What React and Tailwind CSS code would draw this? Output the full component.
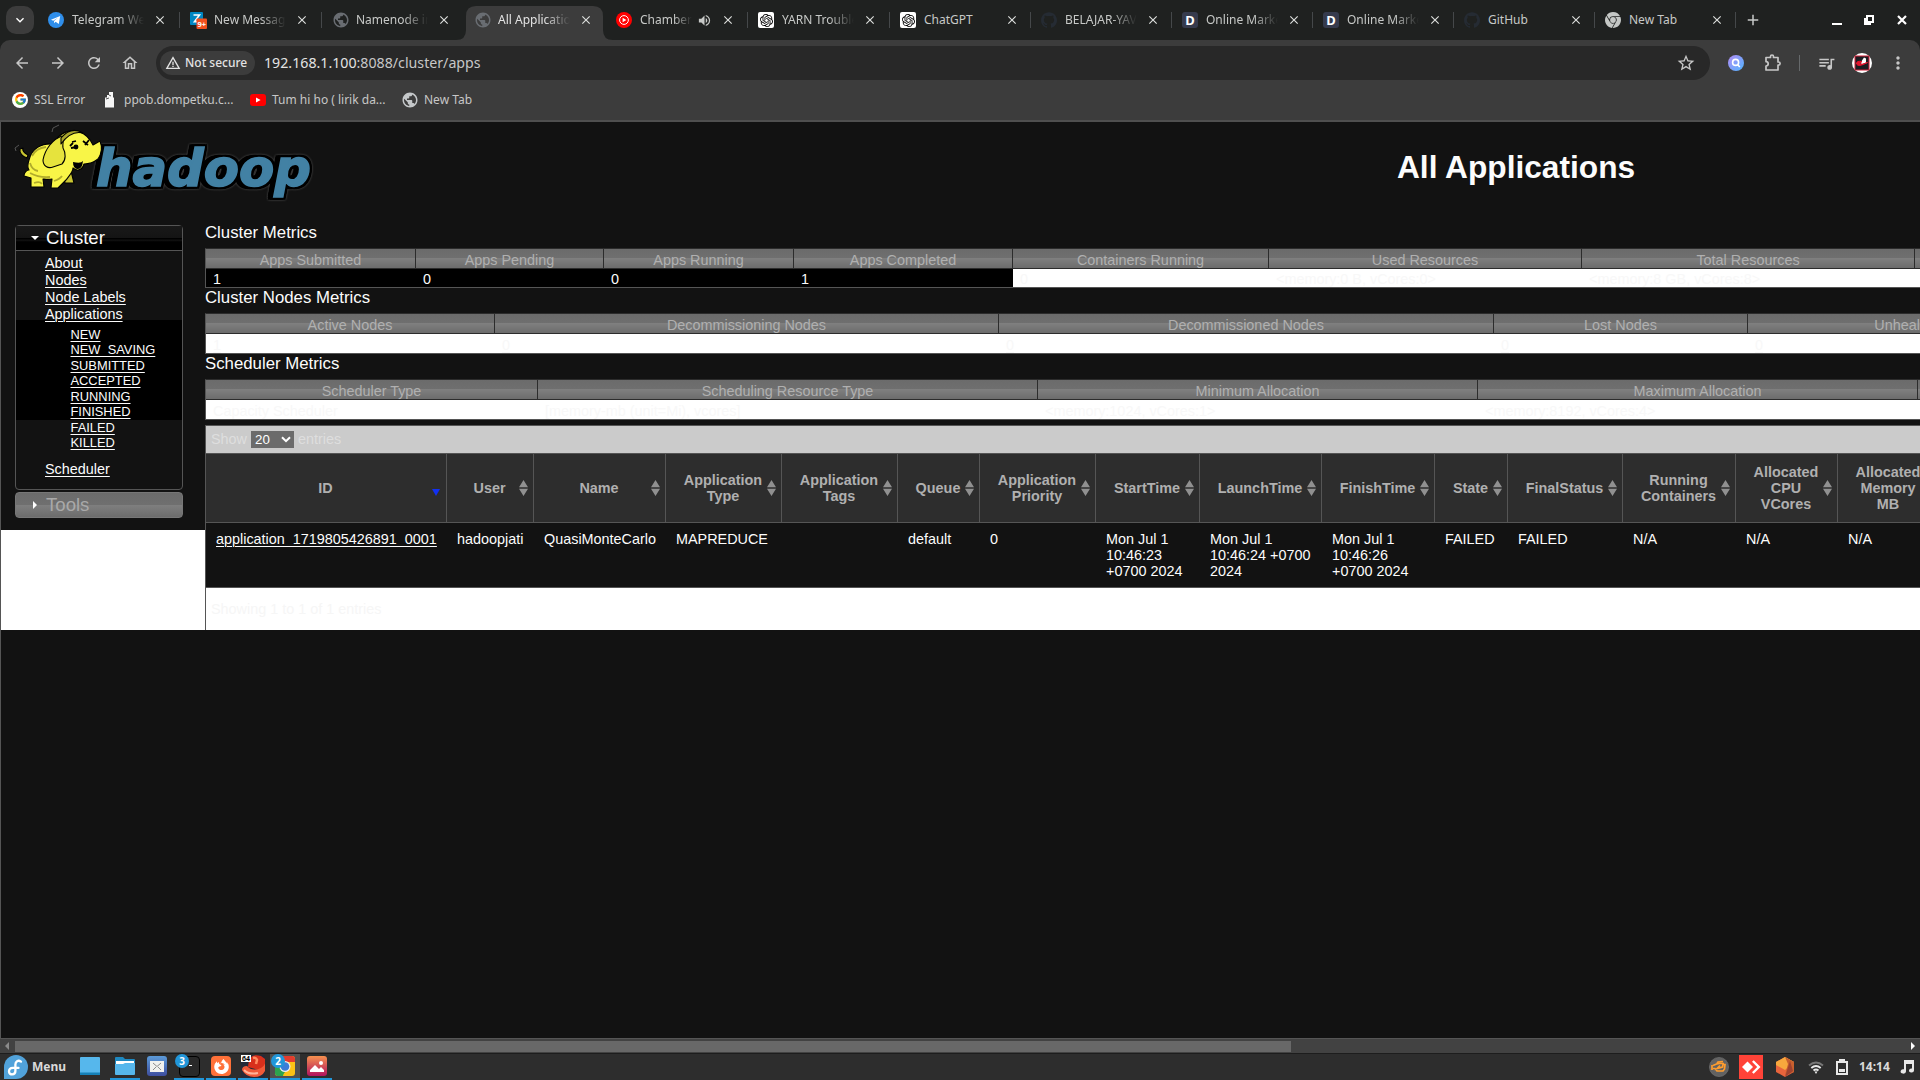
import React from 'react';
import { SiOpenai, SiGithub, SiGooglechrome, SiFirefoxbrowser } from 'react-icons/si';
import {
  MdArrowBack, MdArrowForward, MdRefresh, MdOutlineHome, MdWarningAmber, MdStarBorder,
  MdQueueMusic, MdMoreVert, MdVolumeUp, MdClose, MdAdd, MdPublic, MdExpandMore,
} from 'react-icons/md';
import { FcGoogle } from 'react-icons/fc';

const Telegram = () => (
  <svg viewBox="0 0 16 16" className="h-4 w-4"><circle cx="8" cy="8" r="8" fill="#2f8eea" /><path d="M3 7.8 12.2 4 10.8 12 7.6 9.8 6.2 11.2 6 8.9 9.8 5.8 5.2 8.7Z" fill="#fff" /></svg>
);
const Zimbra = () => (
  <svg viewBox="0 0 17 17" className="h-[17px] w-[17px]">
    <rect width="13" height="13" rx="1" fill="#0087c3" />
    <path d="M3.5 3h6L4.5 9.6h5" fill="none" stroke="#fff" strokeWidth="1.6" />
    <rect x="6.5" y="6.5" width="10.5" height="10.5" rx="1" fill="#f4511e" />
    <text x="11.7" y="14.6" textAnchor="middle" fontSize="7.5" fontWeight="700" fontFamily="Noto Sans, sans-serif" fill="#fff">9+</text>
  </svg>
);
const Globe = ({ light }) => <MdPublic className={light ? 'h-[18px] w-[18px] text-[#c4c7c9]' : 'h-[18px] w-[18px] text-[#696d72]'} />;
const YtMusic = () => (
  <svg viewBox="0 0 16 16" className="h-4 w-4"><circle cx="8" cy="8" r="8" fill="#f00" /><circle cx="8" cy="8" r="4.4" fill="none" stroke="#fff" strokeWidth="1" /><path d="M6.6 5.8 10.4 8 6.6 10.2Z" fill="#fff" /></svg>
);
const Gpt = () => <span className="flex h-4 w-4 items-center justify-center rounded-[2px] bg-white"><SiOpenai className="h-[13px] w-[13px] text-black" /></span>;
const DIcon = () => <span className="flex h-4 w-4 items-center justify-center rounded-[3px] bg-[#363b4d] text-[13px] leading-none font-bold text-white">D</span>;
const Hub = () => <SiGithub className="h-4 w-4 text-[#252b33]" />;

const tabs = [
  [Telegram, 'Telegram Web'], [Zimbra, 'New Message'], [Globe, 'Namenode information'], [Globe, 'All Applications'],
  [YtMusic, 'Chamber of'], [Gpt, 'YARN Troubleshoot'], [Gpt, 'ChatGPT'], [Hub, 'BELAJAR-YAVA'],
  [DIcon, 'Online Market'], [DIcon, 'Online Market'], [Hub, 'GitHub'],
  [() => <SiGooglechrome className="h-4 w-4 text-[#c4c7c5]" />, 'New Tab'],
];

function Tab({ Icon, label, index }) {
  const active = index === 3;
  const audio = index === 4;
  return (
    <div className={`relative flex h-10 shrink-0 items-center pl-[10px] ${index < 6 ? 'w-[142px]' : 'w-[141px]'}`}>
      {active && (
        <svg viewBox="0 0 158 34" className="absolute bottom-0 -left-[8px] h-[34px] w-[158px]">
          <path d="M0 34Q10 34 10 24V10Q10 0 20 0H137Q147 0 147 10V24Q147 34 157 34Z" fill="#3c3c3c" />
        </svg>
      )}
      <span className="relative flex w-[18px] items-center"><Icon /></span>
      <span className={`relative ml-[6px] overflow-hidden whitespace-nowrap text-[12px] ${label.length < 8 ? '' : '[mask-image:linear-gradient(to_right,#000_65%,transparent)]'} ${audio ? 'w-[52px]' : 'w-[72px]'} ${active ? 'text-[#e3e3e3]' : 'text-[#c7c9c7]'}`}>{label}</span>
      {audio && <MdVolumeUp className="ml-[5px] h-[15px] w-[15px] text-[#c7c9c7]" />}
      <MdClose className="absolute left-[115px] h-[14px] w-[14px] text-[#dcdedc]" />
      {index !== 2 && index !== 3 && <span className="absolute right-0 h-4 w-px bg-[#45484a]" />}
    </div>
  );
}

function Browser() {
  return (
    <div className="bg-[#1f2120] font-['Noto_Sans',sans-serif]">
      <div className="flex h-10 items-center">
        <div className="ml-[6px] mr-1 flex h-7 w-7 items-center justify-center rounded-[10px] bg-[#3c3c3c]"><MdExpandMore className="h-4 w-4 text-white" /></div>
        {tabs.map(([Icon, label], i) => <Tab key={i} Icon={Icon} label={label} index={i} />)}
        <MdAdd className="ml-[8px] h-[18px] w-[18px] text-[#c7c9c7]" />
        <span className="mt-[8px] ml-[70px] h-[2px] w-[10px] bg-white" />
        <svg viewBox="0 0 10 10" className="ml-[22px] h-[10px] w-[10px]" fill="none" stroke="#fff" strokeWidth="2"><path d="M3 1h6v6H3ZM1 3v6h6" /></svg>
        <svg viewBox="0 0 10 10" className="ml-[23px] h-[10px] w-[10px]" stroke="#fff" strokeWidth="2.2"><path d="M1 1 9 9M9 1 1 9" /></svg>
      </div>
      <div className="rounded-t-[10px] bg-[#3c3c3c]">
        <div className="flex h-[46px] items-center pl-[13px] text-[#c7c7c7]">
          <MdArrowBack className="h-[18px] w-[18px]" />
          <MdArrowForward className="ml-[18px] h-[18px] w-[18px]" />
          <MdRefresh className="ml-[18px] h-[18px] w-[18px]" />
          <MdOutlineHome className="ml-[18px] h-[18px] w-[18px]" />
          <div className="ml-[17px] flex h-[34px] w-[1554px] items-center rounded-full bg-[#282828] pr-[14px] pl-[4px]">
            <div className="flex h-6 w-[95px] items-center rounded-full bg-[#3c3c3c] pl-[5px] text-[12px] font-medium whitespace-nowrap text-[#e3e3e3]"><MdWarningAmber className="mr-[4px] h-4 w-4" />Not secure</div>
            <span className="mb-px ml-[9px] text-[14.2px] leading-[20px] text-[#e3e3e3]">192.168.1.100<span className="text-[#c7c7c7]">:8088/cluster/apps</span></span>
            <MdStarBorder className="ml-auto h-[20px] w-[20px]" />
          </div>
          <svg viewBox="0 0 16 16" className="ml-[18px] h-4 w-4">
            <defs><linearGradient id="lens" x1="0" y1="0" x2="1" y2="1"><stop stopColor="#b48cf5" /><stop offset="1" stopColor="#4fb4ff" /></linearGradient></defs>
            <circle cx="8" cy="8" r="8" fill="url(#lens)" /><circle cx="7.6" cy="7.4" r="3" fill="none" stroke="#fff" strokeWidth="1.6" /><path d="m9.8 9.8 2 2.2" stroke="#fff" strokeWidth="1.6" />
          </svg>
          <svg viewBox="0 0 18 18" className="mb-px ml-[20px] h-[18px] w-[18px]" fill="none" stroke="#c7c7c7" strokeWidth="1.7" strokeLinejoin="round">
            <path d="M2 3.500h4.500v-1a1.500 1.500 0 0 1 3 0v1H14V8h.500a1.600 1.600 0 0 1 0 3.200H14V16H2v-4a2.200 2.200 0 0 0 0-4.400Z" />
          </svg>
          <span className="ml-[17px] h-4 w-px bg-[#66696b]" />
          <MdQueueMusic className="ml-[17px] h-[19px] w-[19px]" />
          <svg viewBox="0 0 20 20" className="ml-[16px] h-5 w-5"><circle cx="10" cy="10" r="10" fill="#fff" /><path d="M3 3h14v14H3Z" fill="#1c1d22" stroke="#d21f36" strokeWidth="1" /><path d="M9 9 12 4.500 14 5.500V9.500L9.500 12Z" fill="#fff" /><path d="M10 8.500Q4 7.500 4.500 11 6 14.500 15.500 9.500 9 12 8 11 8 9.500 10 8.500Z" fill="#e3132c" stroke="#e3132c" strokeWidth="1" /></svg>
          <MdMoreVert className="ml-[16px] h-5 w-5" />
        </div>
        <div className="flex h-[34px] items-center pb-[7px] pl-3 text-[12px] text-[#c7c7c7]">
          <span className="flex h-4 w-4 items-center justify-center rounded-full bg-white"><FcGoogle className="h-[13px] w-[13px]" /></span>
          <span className="ml-[6px] w-[70px] whitespace-nowrap">SSL Error</span>
          <svg viewBox="0 0 12 16" className="h-4 w-3"><path d="M1 5.500h9v10H1ZM3 3h6v3H3ZM5 0h4v3H5Z" fill="#f5f5f5" /><path d="m2 7 3-1M5 3l2 1" stroke="#555" /></svg>
          <span className="ml-[8px] w-[126px] whitespace-nowrap">ppob.dompetku.c...</span>
          <svg viewBox="0 0 16 12" className="h-3 w-4"><rect width="16" height="12" rx="3" fill="#f00" /><path d="m6 3.600 4.600 2.400L6 8.400Z" fill="#fff" /></svg>
          <span className="ml-[6px] w-[129px] whitespace-nowrap">Tum hi ho ( lirik da...</span>
          <Globe light />
          <span className="ml-[5px]">New Tab</span>
        </div>
        <div className="h-[2px] bg-[#4f4f4f]" />
      </div>
    </div>
  );
}

function Logo() {
  return (
    <svg viewBox="0 0 300 76" className="mt-[3px] ml-[14px] h-[76px] w-[300px] shrink-0 overflow-visible">
      <text
        x="81" y="59.5" textLength="215" lengthAdjust="spacingAndGlyphs"
        fontFamily="DejaVu Sans, sans-serif" fontWeight="700" fontStyle="oblique" fontSize="52"
        fill="#4281a4" stroke="#4281a4" strokeWidth="1.6" strokeLinejoin="miter"
        className="[filter:drop-shadow(2px_0_0_#000)_drop-shadow(0_2px_0_#000)_drop-shadow(0_-2px_0_#000)_drop-shadow(-5px_0_0_#000)_drop-shadow(0_0_1px_#555)]"
      >hadoop</text>
      <g stroke="#000" strokeWidth="1.1" strokeLinejoin="round">
        <path d="M12 32C8 31 4 27 5 23l3-1c-1 3 1 5 5 7Z" fill="#c9c532" />
        <path d="M48 50 56 45 59 57 50 57Z" fill="#c9c532" />
        <path d="M14 34C17 22 27 17 38 18 44 7 55 2 65 6 73 9 77 17 78 19L85 15C87 20 87 27 83 33 78 37 73 38 69 38 67 45 61 45 58 42 58 46 54 50 51 54L43 62 36 62 37 53C33 54 29 53 28 53L29 61 16 61 16 52 9 50C9 46 12 44 14 44 12 41 13 37 14 34Z" fill="#f8f547" />
        <path d="M47 10C38 13 30 23 28 34 28 40 33 43 38 41L47 38C51 34 51 27 48 22 47 17 50 12 47 10Z" fill="#e6e33d" />
        <path d="M46 12Q56 0 68 7 56 4 46 18Z" fill="#a9a52e" />
      </g>
      <path d="m55 20 3-3m-2 5 6-1m6-6 5 4m1-5-4 5m-13-3 4-1" stroke="#000" strokeWidth="1.8" fill="none" />
      <circle cx="61" cy="21" r="2.4" /><path d="M58 36q8 2 10-1-1 9-6 8-4-1-4-7Z" /><path d="M1 25 0 22l4-3M37 6l1-4 6-3" stroke="#555" fill="none" />
      <path d="M19 57q6-2 8 1M39 55q6-2 8-5M15 37q2 7 8 8M15 47q9 5 20 4M17 30q4-8 14-9" stroke="#b0ab2b" strokeWidth="1.8" fill="none" />
    </svg>
  );
}

const link = 'underline underline-offset-[2px] decoration-1';
const glossy = 'bg-[linear-gradient(#6b6b6b_0%,#6f6f6f_48%,#7f7f7f_50%,#6c6c6c_100%)]';

function Sidebar() {
  return (
    <div className="mt-[22px] ml-[14px] w-[168px]">
      <div className="h-[265px] rounded-[4px] border border-[#555] text-[#fcfcfc]">
        <div className="flex h-[25px] items-center border-b border-[#555] bg-[linear-gradient(#191919_0%,#141414_48%,#000_50%,#000_55%,#151515_58%,#000_66%)] text-[18.6px]">
          <span className="ml-[15px] border-x-[4px] border-t-[4px] border-x-transparent border-t-white" />
          <span className="ml-[7px]">Cluster</span>
        </div>
        <ul className="pt-[4px] pl-[29px] text-[14.4px] leading-[17px]">
          {['About', 'Nodes', 'Node Labels', 'Applications'].map((t) => <li key={t} className="relative z-10"><span className={link}>{t}</span></li>)}
        </ul>
        <ul className="-mt-[3px] h-[139px] bg-[linear-gradient(#000_0px,#000_100px,transparent_100px)] pt-[7px] pl-[54.5px] text-[12.86px] leading-[15.45px]">
          {['NEW', 'NEW_SAVING', 'SUBMITTED', 'ACCEPTED', 'RUNNING', 'FINISHED', 'FAILED', 'KILLED'].map((t) => <li key={t}><span className={link}>{t}</span></li>)}
        </ul>
        <div className={`pl-[29px] text-[14.4px] leading-[20px] ${link}`}>Scheduler</div>
      </div>
      <div className={`mt-[2px] flex h-[26px] items-center rounded-[4px] border border-[#777] text-[18.6px] text-[#a9a9a9] ${glossy}`}>
        <span className="ml-[17px] border-y-[4px] border-l-[4px] border-y-transparent border-l-white" />
        <span className="ml-[9px]">Tools</span>
      </div>
    </div>
  );
}

function Metrics({ title, titleCls, rowCls, cols, underlined }) {
  return (
    <section>
      <h3 className={`text-[16.8px] leading-[20px] text-[#fcfcfc] ${titleCls}`}>{title}</h3>
      <div className="border-y border-l border-t-[#2c2c2c] border-b-[#555] border-l-[#555]">
        <div className="flex">
          {cols.map(([h, v, w, dark]) => (
            <div key={h} className="shrink-0" style={{ width: w }}>
              <div className={`flex h-[20px] items-end justify-center border-r border-b border-[#2c2c2c] text-[14.4px] leading-[16px] whitespace-nowrap text-[#b0b0b0] ${glossy}`}>{h}</div>
              <div className={`pl-[7px] text-[14.4px] whitespace-nowrap ${rowCls} ${dark ? 'bg-black text-[#fcfcfc]' : 'bg-white text-[#f8f8f8]'} ${underlined ? link : ''}`}>{v}</div>
            </div>
          ))}
        </div>
      </div>
    </section>
  );
}

const appCols = [
  ['ID', 'application_1719805426891_0001', 241], ['User', 'hadoopjati', 87], ['Name', 'QuasiMonteCarlo', 132],
  ['Application Type', 'MAPREDUCE', 116], ['Application Tags', '', 116], ['Queue', 'default', 82],
  ['Application Priority', '0', 116], ['StartTime', 'Mon Jul 1 10:46:23 +0700 2024', 104],
  ['LaunchTime', 'Mon Jul 1 10:46:24 +0700 2024', 122], ['FinishTime', 'Mon Jul 1 10:46:26 +0700 2024', 113],
  ['State', 'FAILED', 73], ['FinalStatus', 'FAILED', 115], ['Running Containers', 'N/A', 113],
  ['Allocated CPU VCores', 'N/A', 102], ['Allocated Memory MB', 'N/A', 102],
];

function Apps() {
  return (
    <section className="mt-[5px] border-y border-l border-[#555]">
      <div className="flex h-[27px] items-center bg-[#cbcbcb] pl-[5px] text-[14.4px] text-[#dedede]">
        Show
        <span className="mx-[4px] flex h-[17px] w-[43px] items-center justify-between bg-[#6b6b6b] pr-[3px] pl-[4px] text-[13.33px] text-white">
          20<svg viewBox="0 0 10 7" className="h-[7px] w-[10px]"><path d="m1 1.200 4 4 4-4" fill="none" stroke="#fff" strokeWidth="2" /></svg>
        </span>
        entries
      </div>
      <div className="flex border-y border-[#555]">
        {appCols.map(([h, v, w], i) => (
          <div key={h} className="shrink-0" style={{ width: w }}>
            <div className="relative flex h-[69px] items-center justify-center border-r border-b border-[#555] bg-[#2d2d2d] pr-[18px] pl-[17px] text-center text-[14.4px] leading-[16px] font-bold text-[#b0b0b0]">
              <span className="shrink-0" style={{ maxWidth: w - 30 }}>{h}</span>
              {i === 0 ? (
                <span className="absolute top-[35px] right-[6px] border-x-[4px] border-t-[7px] border-x-transparent border-t-[#1230f0]" />
              ) : (
                <svg viewBox="0 0 9 16" className="absolute top-[26px] right-[5px] h-4 w-[9px]"><path d="M0 7.300 4.500 0 9 7.300ZM0 8.700h9L4.500 16Z" fill="#909090" /></svg>
              )}
            </div>
            <div className="h-[64px] bg-[#121212] pt-[8px] pr-[8px] pl-[10px] text-[14.4px] leading-[16px] text-[#fcfcfc]">
              <span className={i === 0 ? link : ''}>{v}</span>
            </div>
          </div>
        ))}
      </div>
      <div className="h-[42px] bg-white pt-[11px] pl-[5px] text-[14.4px] leading-[20px] text-[#f6f6f6]">Showing 1 to 1 of 1 entries</div>
    </section>
  );
}

const Item = ({ children, on, hot }) => (
  <div className={`relative flex h-[26px] w-[30px] items-center justify-center ${on ? 'border-b-2 border-[#2196d9]' : 'border-b-2 border-transparent'} ${hot ? 'bg-[#505050]' : ''}`}>{children}</div>
);
const Badge = ({ n }) => <span className="absolute top-0 left-px flex h-[14px] w-[14px] items-center justify-center rounded-full bg-[#2196d9] text-[10px] leading-none font-bold text-white">{n}</span>;

function Taskbar() {
  return (
    <div className="flex h-[27px] items-center border-t border-[#1d1d1d] bg-[#2d2d2d] font-['Noto_Sans',sans-serif]">
      <svg viewBox="0 0 24 24" className="ml-[4px] h-6 w-6"><path d="M12 0a12 12 0 0 1 0 24H0V12A12 12 0 0 1 12 0Z" fill="#51a2da" /><path d="M17 6.600c-3-2-5.600 0-5.600 3v6.500c0 4.400-6.400 4.400-6.400.4 0-2.800 2.400-3.600 4-3.600h5.500" fill="none" stroke="#fff" strokeWidth="2.3" strokeLinecap="round" /></svg>
      <span className="ml-[4px] w-[43px] text-[12px] font-bold text-[#dadada]">Menu</span>
      <div className="flex gap-[2px]">
        <Item><svg viewBox="0 0 20 18" className="h-[18px] w-5"><rect width="20" height="18" rx="1" fill="#56b7ec" /><rect y="15.5" width="20" height="2.5" fill="#1581b8" /></svg></Item>
        <span className="w-px" />
        <Item on><svg viewBox="0 0 20 18" className="h-[18px] w-5"><path d="M0 1q0-1 1-1h7l2 2h9q1 0 1 1v4H0Z" fill="#1e88c0" /><rect x="1" y="4" width="18" height="4" fill="#fff" /><path d="M0 7h8l2-1h10v11q0 1-1 1H1q-1 0-1-1Z" fill="#56b7ec" /></svg></Item>
        <Item><svg viewBox="0 0 20 20" className="h-5 w-5"><defs><linearGradient id="mail" x2="0" y2="1"><stop stopColor="#5b9ad8" /><stop offset="1" stopColor="#3e4e9e" /></linearGradient></defs><rect width="20" height="20" rx="3" fill="url(#mail)" /><rect x="3" y="5" width="14" height="11" fill="#f1f1ee" /><path d="m6 7 4 3.500L14 7M6 14l3-3m5 3-3-3" stroke="#8c8c8c" fill="none" /></svg></Item>
        <Item on><span className="flex h-[21px] w-[21px] rounded-[4px] border border-black bg-[#292929] pt-[8px] pl-[9px]"><span className="h-px w-[3px] bg-white" /></span><Badge n="3" /></Item>
        <Item on><span className="flex h-5 w-5 items-center justify-center rounded-[4px] bg-[#ff7139]"><SiFirefoxbrowser className="h-[15px] w-[15px] text-white" /></span></Item>
        <Item on>
          <svg viewBox="0 0 24 23" className="h-[23px] w-6"><rect width="24" height="23" fill="#252a38" /><path d="M7 12C8 0 13-1 20 1l4 3v8l-6 3Z" fill="#d8301c" /><path d="M1 15Q1 11 6 11q5 6 14 2 5-3 4-7v10q-3 6-11 6T1 15Z" fill="#f15a38" /><path d="M3 15q5 5 14 3" stroke="#ffb498" strokeWidth="2" fill="none" /><path d="M12 3q3-1 4 2l-1 4" stroke="#ff8a60" strokeWidth="2.5" fill="none" /><rect width="10" height="7" fill="#fff" /><text x="5" y="6" textAnchor="middle" fontSize="7" fontWeight="700" fontFamily="Noto Sans, sans-serif">64</text></svg>
        </Item>
        <Item on hot>
          <svg viewBox="0 0 20 20" className="h-5 w-5"><rect width="20" height="20" rx="3" fill="#fbc116" /><path d="M3 0h14q3 0 3 3v3H10L2 14 0 8V3q0-3 3-3Z" fill="#e33b2e" /><path d="M0 6 9 14l-1 6H3q-3 0-3-3Z" fill="#2da44e" /><path d="M7 20 13 12l-8-1-3 9Z" fill="#2da44e" /><circle cx="10" cy="10.5" r="5.5" fill="#eee" /><circle cx="10" cy="10.5" r="4.3" fill="#3b7dd8" /></svg>
          <Badge n="2" />
        </Item>
        <Item on>
          <svg viewBox="0 0 20 20" className="h-5 w-5"><defs><linearGradient id="pic" x2="0" y2="1"><stop stopColor="#f6914f" /><stop offset="1" stopColor="#b0125f" /></linearGradient></defs><rect width="20" height="20" rx="3" fill="url(#pic)" /><path d="M3 16v-2l5-5 4 4 2-2 3 3v2Z" fill="#fff" /><circle cx="14" cy="7" r="2" fill="#fff" /></svg>
        </Item>
      </div>
      <svg viewBox="0 0 20 20" className="ml-auto h-5 w-5"><circle cx="10" cy="10" r="9.6" fill="#626262" stroke="#777" strokeWidth=".6" /><path d="M4 8.500 7.500 7l3-.500h4.500M8 6.500 9 5l5-.500M3 8v5M4 11.500h2l2 2.500h6l1.500-2 .500-4.500h-2L13.500 10 8 11.500 11 8.500" fill="none" stroke="#ff9d2e" strokeWidth="1.7" /></svg>
      <svg viewBox="0 0 24 24" className="ml-[10px] h-6 w-6"><rect width="24" height="24" fill="#ff4338" /><path d="m8.500 6.500 5.500 5.500-5.500 5.500L3 12Z" fill="#fff" /><path d="m13 6.800 1.700-1.600L21.500 12l-6.800 6.800L13 17.200 18.200 12Z" fill="#fff" /></svg>
      <svg viewBox="0 0 18 20" className="ml-[13px] h-5 w-[18px]"><path d="m9 0 9 5v10l-9 5-9-5V5Z" fill="#e8643c" /><path d="m9 0 9 5-9 8L0 8V5Z" fill="#f7a83d" /><path d="m9 0 9 5v10l-9 3 3-11Z" fill="#c8602e" /><path d="m14 4 3 10-8 6Z" fill="#9f4230" /></svg>
      <svg viewBox="0 0 16 13" className="ml-[14px] h-[13px] w-4" fill="none" stroke="#e8e8e8" strokeWidth="1.9"><path d="M1 4.500q7-6 14 0" stroke="#777" /><path d="M3.300 7q4.700-4 9.400 0M5.500 9.400q2.500-2 5 0" /><path d="M6.500 10.500h3L8 13Z" fill="#e8e8e8" stroke="none" /></svg>
      <svg viewBox="0 0 12 16" className="ml-[12px] h-4 w-3"><path d="M3 2V0h6v2h3v14H0V2Zm-1 2v10h8V4Z" fill="#e8e8e8" fillRule="evenodd" /><path d="M3 10h6v3H3Z" fill="#e8e8e8" /></svg>
      <span className="ml-[11px] w-[41px] text-[12px] font-bold text-[#dadada]">14:14</span>
      <svg viewBox="0 0 14 14" className="mr-[6px] h-[14px] w-[14px]"><path d="M4 0h10v10.500a2.500 2 0 1 1-2-2V4H6v7.500a2.700 2.200 0 1 1-2-2.200Z" fill="#e8e8e8" /></svg>
    </div>
  );
}

export default function App() {
  return (
    <div className="flex h-[1080px] w-[1920px] flex-col overflow-hidden bg-[#121212]">
      <Browser />
      <div className="flex min-h-0 flex-1 flex-col border-l border-[#555] font-['Liberation_Sans',Arial,sans-serif]">
        <div className="flex h-[81px] items-center">
          <Logo />
          <h1 className="mt-[10px] ml-[1082px] text-[31.68px] leading-none font-bold whitespace-nowrap text-[#fcfcfc]">All Applications</h1>
        </div>
        <div className="flex h-[427px]">
          <div className="flex w-[204px] shrink-0 flex-col bg-[linear-gradient(#121212_0px,#121212_327px,#fff_327px)]">
            <Sidebar />
          </div>
          <main className="min-w-0 flex-1 overflow-hidden">
            <Metrics title="Cluster Metrics" titleCls="pt-[20px] pb-[5px]" rowCls="h-[18px] leading-[21px]" cols={[
              ['Apps Submitted', '1', 210, 1], ['Apps Pending', '0', 188, 1], ['Apps Running', '0', 190, 1], ['Apps Completed', '1', 219, 1],
              ['Containers Running', '0', 256], ['Used Resources', '<memory:0 B, vCores:0>', 313], ['Total Resources', '<memory:8 GB, vCores:8>', 333], ['Reserved Resources', '', 200],
            ]} />
            <Metrics underlined title="Cluster Nodes Metrics" titleCls="pb-[5px]" rowCls="h-[19px] leading-[22px]" cols={[
              ['Active Nodes', '1', 289], ['Decommissioning Nodes', '0', 504], ['Decommissioned Nodes', '0', 495], ['Lost Nodes', '0', 254], ['Unhealthy Nodes', '0', 364],
            ]} />
            <Metrics title="Scheduler Metrics" titleCls="pb-[5px]" rowCls="h-[19px] leading-[22px]" cols={[
              ['Scheduler Type', 'Capacity Scheduler', 332], ['Scheduling Resource Type', '[memory-mb (unit=Mi), vcores]', 500], ['Minimum Allocation', '<memory:1024, vCores:1>', 440], ['Maximum Allocation', '<memory:8192, vCores:4>', 440], ['Maximum Cluster', '', 200],
            ]} />
            <Apps />
          </main>
        </div>
        <div className="flex-1" />
      </div>
      <div className="flex h-[15px] items-center border-t border-[#555] bg-[#424242]">
        <span className="mr-[6px] ml-[5px] border-y-[4px] border-r-[4px] border-y-transparent border-r-[#8a8a8a]" />
        <span className="h-[11px] w-[1276px] bg-[#686868]" />
        <span className="mr-[5px] ml-auto border-y-[4px] border-l-[4px] border-y-transparent border-l-white" />
      </div>
      <Taskbar />
    </div>
  );
}
